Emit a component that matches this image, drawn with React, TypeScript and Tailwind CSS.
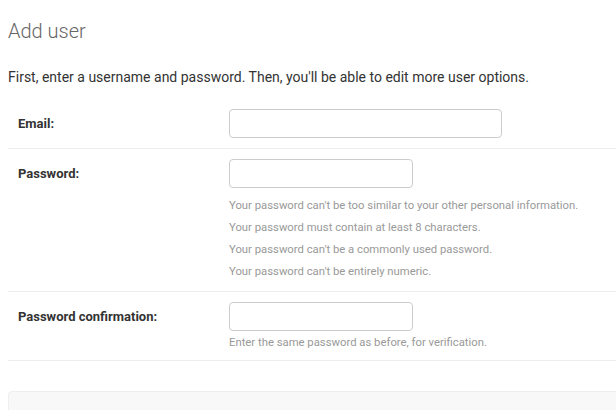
export default function App() {
  const passwordHelp = [
    "Your password can't be too similar to your other personal information.",
    "Your password must contain at least 8 characters.",
    "Your password can't be a commonly used password.",
    "Your password can't be entirely numeric.",
  ];

  return (
    <div className="h-[410px] w-[616px] overflow-hidden bg-white pl-2 font-['Roboto',sans-serif] text-[#333]">
      {/* Title */}
      <h1 className="pt-[17px] text-[20px] font-light leading-[28px] text-[#666]">
        Add user
      </h1>

      <p className="mt-[23px] text-[14px] leading-[18px] text-[#333]">
        First, enter a username and password. Then, you'll be able to edit more
        user options.
      </p>

      {/* Form rows */}
      <div className="mt-[13px] w-[640px]">
        <div className="flex border-b border-[#eee] p-[10px]">
          <label className="flex h-[29px] w-[211px] shrink-0 items-center text-[13px] font-bold text-[#333]">
            Email:
          </label>
          <input
            type="email"
            className="h-[29px] w-[273px] rounded-[4px] border border-[#ccc] bg-white px-[6px] text-[13px] outline-none"
          />
        </div>

        <div className="flex border-b border-[#eee] px-[10px] pb-[11px] pt-[10px]">
          <label className="flex h-[29px] w-[211px] shrink-0 items-center text-[13px] font-bold text-[#333]">
            Password:
          </label>
          <div>
            <input
              type="password"
              className="h-[29px] w-[184px] rounded-[4px] border border-[#ccc] bg-white px-[6px] text-[13px] outline-none"
            />
            <ul className="mt-[10px] flex flex-col gap-[6px]">
              {passwordHelp.map((t) => (
                <li key={t} className="text-[11.3px] leading-[16px] text-[#999]">
                  {t}
                </li>
              ))}
            </ul>
          </div>
        </div>

        <div className="flex border-b border-[#eee] px-[10px] pb-[9px] pt-[10px]">
          <label className="flex h-[29px] w-[211px] shrink-0 items-center text-[13px] font-bold text-[#333]">
            Password confirmation:
          </label>
          <div>
            <input
              type="password"
              className="h-[29px] w-[184px] rounded-[4px] border border-[#ccc] bg-white px-[6px] text-[13px] outline-none"
            />
            <div className="mt-[4px] text-[11.3px] leading-[16px] text-[#999]">
              Enter the same password as before, for verification.
            </div>
          </div>
        </div>
      </div>

      {/* Submit row */}
      <div className="mt-[30px] h-[60px] w-[640px] rounded-[4px] border border-[#eee] bg-[#f8f8f8]" />
    </div>
  );
}
